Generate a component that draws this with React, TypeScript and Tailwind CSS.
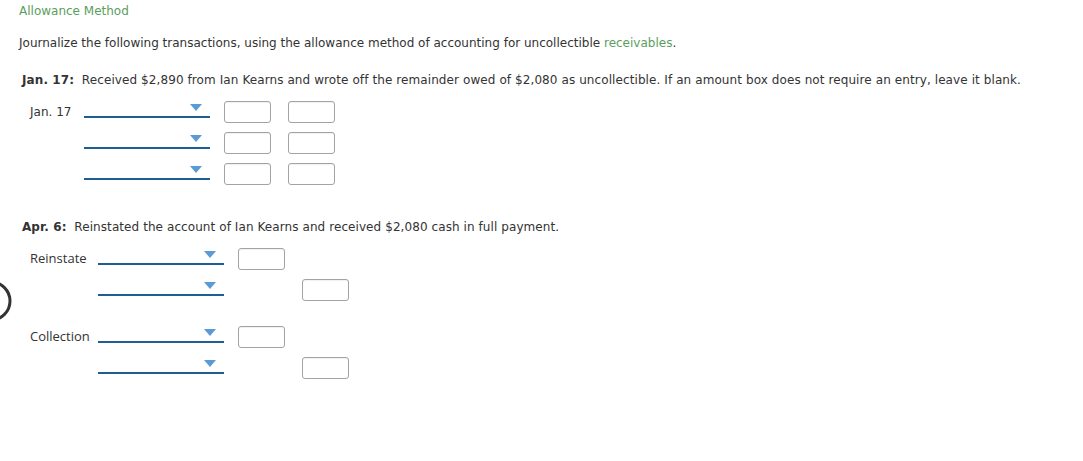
import React from "react";

type Row = { label?: string; debit: boolean; credit: boolean };

const janRows: Row[] = [
  { label: "Jan. 17", debit: true, credit: true },
  { debit: true, credit: true },
  { debit: true, credit: true }
];

function Dropdown() {
  return (
    <div className="relative h-[21px] w-[126px] shrink-0 border-b-2 border-[#1d5f95]">
      <svg className="absolute right-[8px] top-[7px]" width="12" height="7" viewBox="0 0 12 7">
        <polygon points="0,0 12,0 6,7" fill="#5b9bd5" />
      </svg>
    </div>
  );
}

function Box({ hidden }: { hidden?: boolean }) {
  return (
    <div
      className={
        hidden
          ? "mt-[4px] h-[22px] w-[47px] shrink-0"
          : "mt-[4px] h-[22px] w-[47px] shrink-0 rounded-[3px] border border-[#a3a3a3] bg-white shadow-[inset_0_1px_1px_rgba(0,0,0,0.06)]"
      }
    />
  );
}

export default function App() {
  return (
    <div className="relative h-[461px] w-[1083px] overflow-hidden bg-white text-[12px] leading-[16px] text-[#333] [font-family:'DejaVu_Sans',Verdana,sans-serif]">
      <svg className="absolute left-0 top-[279px]" width="14" height="44" viewBox="0 0 14 44">
        <circle cx="-9" cy="22" r="19" fill="none" stroke="#333" strokeWidth="3" />
      </svg>

      <div className="pl-[19px] pt-[3px] text-[#5a9e5e]">Allowance Method</div>
      <div className="pl-[19px] pt-[16px]">
        Journalize the following transactions, using the allowance method of accounting for uncollectible{" "}
        <span className="text-[#5a9e5e]">receivables</span>.
      </div>

      <div className="pl-[22px] pt-[21px] tracking-[0.09px]">
        <span className="font-bold">Jan. 17:</span>&nbsp; Received $2,890 from Ian Kearns and wrote off the remainder owed of $2,080 as uncollectible. If an amount box does not require an entry, leave it blank.
      </div>

      <div className="flex flex-col pl-[30px] pt-[9px]">
        {janRows.map((r, i) => (
          <div key={i} className="flex h-[31px] items-start">
            <div className="w-[54px] shrink-0 pt-[7px]">{r.label ?? ""}</div>
            <Dropdown />
            <div className="ml-[14px]">
              <Box />
            </div>
            <div className="ml-[17px]">
              <Box />
            </div>
          </div>
        ))}
      </div>

      <div className="pl-[22px] pt-[29px] tracking-[0.08px]">
        <span className="font-bold">Apr. 6:</span>&nbsp; Reinstated the account of Ian Kearns and received $2,080 cash in full payment.
      </div>

      <div className="flex flex-col pl-[30px] pt-[9px] text-[13px] [font-family:'Open_Sans',sans-serif]">
        <div className="flex h-[31px] items-start">
          <div className="w-[68px] shrink-0 pt-[6px]">Reinstate</div>
          <Dropdown />
          <div className="ml-[14px]"><Box /></div>
        </div>
        <div className="flex h-[31px] items-start">
          <div className="w-[68px] shrink-0" />
          <Dropdown />
          <div className="ml-[14px]"><Box hidden /></div>
          <div className="ml-[17px]"><Box /></div>
        </div>
        <div className="mt-[16px] flex h-[31px] items-start">
          <div className="w-[68px] shrink-0 pt-[6px]">Collection</div>
          <Dropdown />
          <div className="ml-[14px]"><Box /></div>
        </div>
        <div className="flex h-[31px] items-start">
          <div className="w-[68px] shrink-0" />
          <Dropdown />
          <div className="ml-[14px]"><Box hidden /></div>
          <div className="ml-[17px]"><Box /></div>
        </div>
      </div>
    </div>
  );
}
